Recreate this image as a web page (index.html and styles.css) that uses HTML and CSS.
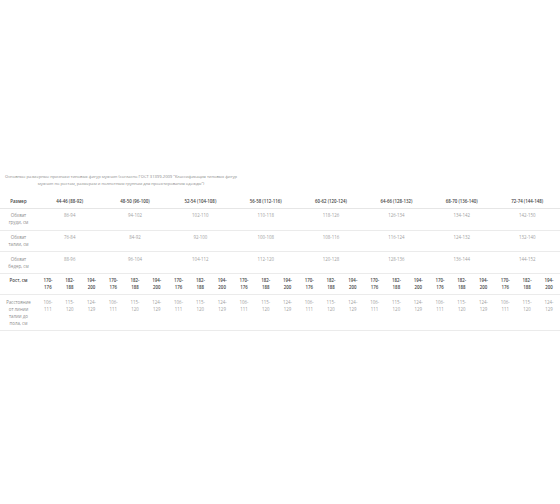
FILE: index.html
```html
<!DOCTYPE html>
<html lang="ru">
<head>
<meta charset="utf-8">
<title>Размерные признаки</title>
<link rel="stylesheet" href="styles.css">
</head>
<body>
<div class="page">
  <p class="caption">Основные размерные признаки типовых фигур мужчин (согласно ГОСТ 31399-2009 "Классификация типовых фигур мужчин по ростам, размерам и полнотным группам для проектирования одежды")</p>
  <table class="sizes">
    <colgroup>
      <col class="col-label">
      <col span="24">
    </colgroup>
    <thead>
      <tr>
        <th>Размер</th>
        <th colspan="3">44-46 (88-92)</th>
        <th colspan="3">48-50 (96-100)</th>
        <th colspan="3">52-54 (104-108)</th>
        <th colspan="3">56-58 (112-116)</th>
        <th colspan="3">60-62 (120-124)</th>
        <th colspan="3">64-66 (128-132)</th>
        <th colspan="3">68-70 (136-140)</th>
        <th colspan="3">72-74 (144-148)</th>
      </tr>
    </thead>
    <tbody>
      <tr>
        <td class="label">Обхват груди, см</td>
        <td colspan="3">86-94</td><td colspan="3">94-102</td><td colspan="3">102-110</td><td colspan="3">110-118</td>
        <td colspan="3">118-126</td><td colspan="3">126-134</td><td colspan="3">134-142</td><td colspan="3">142-150</td>
      </tr>
      <tr>
        <td class="label">Обхват талии, см</td>
        <td colspan="3">76-84</td><td colspan="3">84-92</td><td colspan="3">92-100</td><td colspan="3">100-108</td>
        <td colspan="3">108-116</td><td colspan="3">116-124</td><td colspan="3">124-132</td><td colspan="3">132-140</td>
      </tr>
      <tr>
        <td class="label">Обхват бедер, см</td>
        <td colspan="3">88-96</td><td colspan="3">96-104</td><td colspan="3">104-112</td><td colspan="3">112-120</td>
        <td colspan="3">120-128</td><td colspan="3">128-136</td><td colspan="3">136-144</td><td colspan="3">144-152</td>
      </tr>
      <tr class="height">
        <th>Рост, см</th>
        <th>170-176</th><th>182-188</th><th>194-200</th>
        <th>170-176</th><th>182-188</th><th>194-200</th>
        <th>170-176</th><th>182-188</th><th>194-200</th>
        <th>170-176</th><th>182-188</th><th>194-200</th>
        <th>170-176</th><th>182-188</th><th>194-200</th>
        <th>170-176</th><th>182-188</th><th>194-200</th>
        <th>170-176</th><th>182-188</th><th>194-200</th>
        <th>170-176</th><th>182-188</th><th>194-200</th>
      </tr>
      <tr>
        <td class="label">Расстояние от линии талии до пола, см</td>
        <td>106-111</td><td>115-120</td><td>124-129</td>
        <td>106-111</td><td>115-120</td><td>124-129</td>
        <td>106-111</td><td>115-120</td><td>124-129</td>
        <td>106-111</td><td>115-120</td><td>124-129</td>
        <td>106-111</td><td>115-120</td><td>124-129</td>
        <td>106-111</td><td>115-120</td><td>124-129</td>
        <td>106-111</td><td>115-120</td><td>124-129</td>
        <td>106-111</td><td>115-120</td><td>124-129</td>
      </tr>
    </tbody>
  </table>
</div>
</body>
</html>
```

FILE: styles.css
```css
html, body {
  margin: 0;
  padding: 0;
  background: #ffffff;
}

body {
  font-family: "Open Sans", "Liberation Sans", sans-serif;
}

.page {
  min-height: 100vh;
  display: flex;
  flex-direction: column;
  justify-content: center;
}

.caption {
  width: 242px;
  margin: 0 0 7.5px;
  text-align: center;
  font-size: 4.1px;
  line-height: 7px;
  color: #8a8a8a;
}

.sizes {
  width: 100%;
  border-collapse: collapse;
  table-layout: fixed;
  font-size: 4.4px;
  line-height: 7px;
}

.col-label {
  width: 37px;
}

.sizes th,
.sizes td {
  padding: 3.3px 4px;
  text-align: center;
  vertical-align: top;
  border-bottom: 1px solid #ebebeb;
}

.sizes thead th {
  border-bottom-color: #e6e6e6;
}

.sizes th {
  font-weight: 600;
  color: #444444;
}

.sizes td {
  color: #a0a0a0;
}

.sizes td.label {
  color: #8c8c8c;
}
```
